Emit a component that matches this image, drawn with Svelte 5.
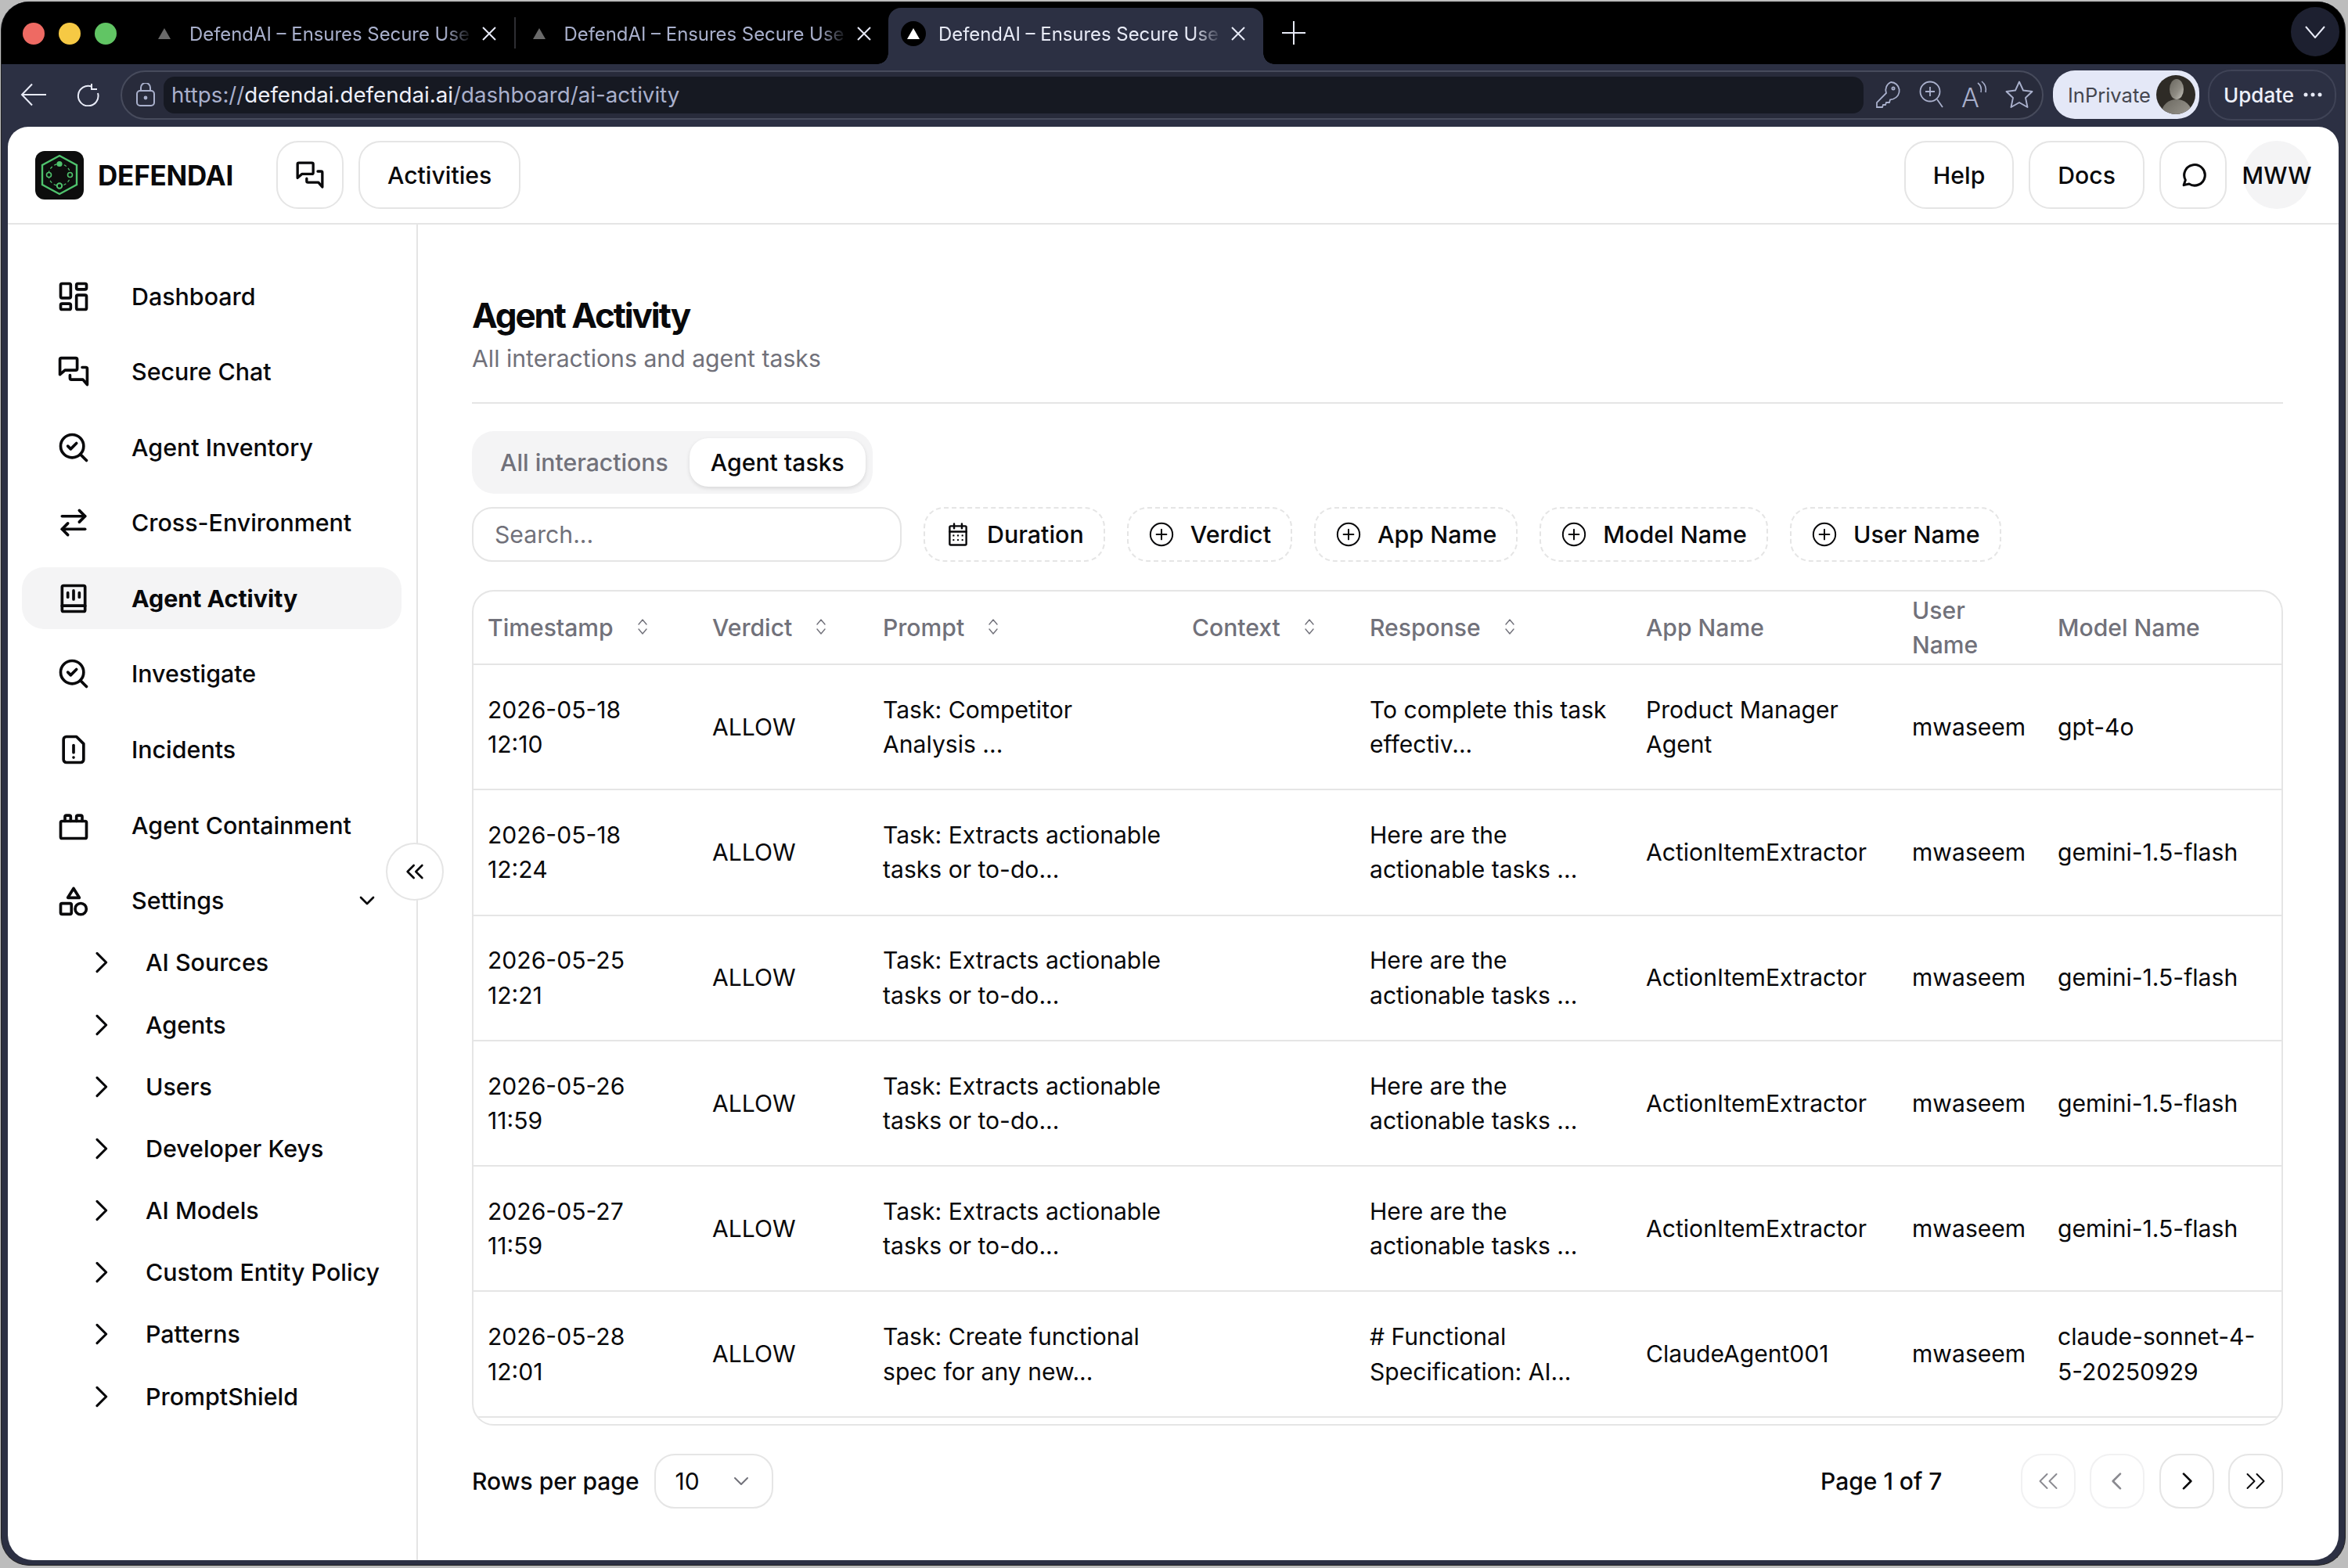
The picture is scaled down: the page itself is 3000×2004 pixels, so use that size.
<script>
	const rr = (x, y, w, h, r = 1) =>
		`M${x + r} ${y}h${w - 2 * r}a${r} ${r} 0 0 1 ${r} ${r}v${h - 2 * r}a${r} ${r} 0 0 1 -${r} ${r}h-${w - 2 * r}a${r} ${r} 0 0 1 -${r} -${r}v-${h - 2 * r}a${r} ${r} 0 0 1 ${r} -${r}z`;
	const circ = (x, y, r) => `M${x - r} ${y}a${r} ${r} 0 1 0 ${2 * r} 0a${r} ${r} 0 1 0 -${2 * r} 0`;

	const icons = {
		dashboard: [rr(3, 3, 7, 10), rr(14, 3, 7, 4), rr(14, 11, 7, 10), rr(3, 17, 7, 4)],
		chat: [
			'M2.5 14V3.5a1 1 0 0 1 1-1h10a1 1 0 0 1 1 1V10a1 1 0 0 1-1 1H6z',
			'M9.500 14.500V16.500a1 1 0 0 0 1 1h8l3 3.500V10a1 1 0 0 0-1-1h-2.500'
		],
		check: [circ(11, 11, 8), 'M21 21l-4.3-4.3', 'M8 11l2 2l4-4'],
		swap: ['M4 7.5h16', 'M16 3.5l4 4l-4 4', 'M20 16.5H4', 'M8 12.5l-4 4l4 4'],
		activity: [rr(4, 3, 16, 18), 'M4 17h16', 'M8 8v3', 'M12 6.5v6', 'M16 8v3'],
		incident: ['M5 5a2 2 0 0 1 2-2h7l5 5v11a2 2 0 0 1-2 2H7a2 2 0 0 1-2-2z', 'M12 9v5', 'M12 17.5v.01'],
		contain: [
			rr(3, 9, 18, 12),
			'M6 9V6a1 1 0 0 1 1-1h2a1 1 0 0 1 1 1v3',
			'M14 9V6a1 1 0 0 1 1-1h2a1 1 0 0 1 1 1v3'
		],
		shapes: ['M12 3.5l4 6.5h-8z', rr(3, 14, 7.5, 7.5), circ(17, 17.8, 3.9)],
		down: ['M6 9l6 6l6-6'],
		right: ['M9 5l7 7l-7 7'],
		left: ['M15 5l-7 7l7 7'],
		dleft: ['M11 6l-6 6l6 6', 'M19 6l-6 6l6 6'],
		dright: ['M5 6l6 6l-6 6', 'M13 6l6 6l-6 6'],
		bubble: ['M4 20.5l1.4-4.2A8.6 8.6 0 1 1 8.4 19.5z'],
		calendar: [rr(4.5, 4.5, 15, 17), 'M4.5 9.5h15', 'M8.5 2.5v4', 'M15.5 2.5v4', 'M8 13h.01M12 13h.01M16 13h.01M8 17h.01M12 17h.01M16 17h.01'],
		plus: [circ(12, 12, 10), 'M12 7.5v9', 'M7.5 12h9'],
		sort: ['M7 9l5-6l5 6', 'M7 15l5 6l5-6']
	};

	const nav = [
		{ label: 'Dashboard', icon: 'dashboard' },
		{ label: 'Secure Chat', icon: 'chat' },
		{ label: 'Agent Inventory', icon: 'check' },
		{ label: 'Cross-Environment', icon: 'swap' },
		{ label: 'Agent Activity', icon: 'activity', active: true },
		{ label: 'Investigate', icon: 'check' },
		{ label: 'Incidents', icon: 'incident' },
		{ label: 'Agent Containment', icon: 'contain' }
	];
	const sub = ['AI Sources', 'Agents', 'Users', 'Developer Keys', 'AI Models', 'Custom Entity Policy', 'Patterns', 'PromptShield'];
	const filters = ['Verdict', 'App Name', 'Model Name', 'User Name'];

	const columns = [
		{ label: 'Timestamp', sort: true },
		{ label: 'Verdict', sort: true },
		{ label: 'Prompt', sort: true },
		{ label: 'Context', sort: true },
		{ label: 'Response', sort: true },
		{ label: 'App Name' },
		{ label: 'User\nName' },
		{ label: 'Model Name' }
	];

	const extract = 'Task: Extracts actionable\ntasks or to-do...';
	const tasks = 'Here are the\nactionable tasks ...';
	const rows = [
		['2026-05-18\n12:10', 'Task: Competitor\nAnalysis ...', 'To complete this task\neffectiv...', 'Product Manager\nAgent', 'gpt-4o'],
		['2026-05-18\n12:24', extract, tasks, 'ActionItemExtractor', 'gemini-1.5-flash'],
		['2026-05-25\n12:21', extract, tasks, 'ActionItemExtractor', 'gemini-1.5-flash'],
		['2026-05-26\n11:59', extract, tasks, 'ActionItemExtractor', 'gemini-1.5-flash'],
		['2026-05-27\n11:59', extract, tasks, 'ActionItemExtractor', 'gemini-1.5-flash'],
		['2026-05-28\n12:01', 'Task: Create functional\nspec for any new...', '# Functional\nSpecification: AI...', 'ClaudeAgent001', 'claude-sonnet-4-\n5-20250929']
	];
</script>

{#snippet ic(name, size = 44, sw = 2)}
	<svg width={size} height={size} viewBox="0 0 24 24" fill="none" stroke="currentColor" stroke-width={sw} stroke-linecap="round" stroke-linejoin="round">
		{#each icons[name] as d}
			<path {d} />
		{/each}
	</svg>
{/snippet}

{#snippet browserTab(active)}
	<div class="tab" class:active>
		<span class="favicon"><i></i></span>
		<span class="tab-title">DefendAI – Ensures Secure Use of AI</span>
		<svg class="tab-x" width="20" height="20" viewBox="0 0 20 20" stroke="currentColor" stroke-width="2"><path d="M2 2l16 16M18 2L2 18" /></svg>
	</div>
{/snippet}

<div class="window">
	<div class="titlebar">
		<div class="lights"><i class="red"></i><i class="yellow"></i><i class="green"></i></div>
		{@render browserTab(false)}
		<span class="tab-sep"></span>
		{@render browserTab(false)}
		{@render browserTab(true)}
		<svg class="new-tab" width="30" height="30" viewBox="0 0 30 30" stroke="#e8ebf7" stroke-width="2"><path d="M15 0v30M0 15h30" /></svg>
		<div class="tab-menu">
			<svg width="26" height="16" viewBox="0 0 26 16" fill="none" stroke="#e8ebf7" stroke-width="2"><path d="M1 1l12 14L25 1" /></svg>
		</div>
	</div>

	<div class="toolbar">
		<svg class="back" width="34" height="30" viewBox="0 0 34 30" fill="none" stroke="#e8ebf7" stroke-width="2"><path d="M33 15H2M15 1.5L2 15l13 13.5" /></svg>
		<svg class="reload" width="30" height="30" viewBox="0 0 30 30" fill="none" stroke="#e8ebf7" stroke-width="2"><path d="M19 4.5A12.8 12.8 0 1 0 27 13M19 1v7h7" /></svg>
		<div class="address">
			<svg class="lock" width="26" height="30" viewBox="0 0 26 30" fill="none" stroke="#a9b0cc" stroke-width="2"><rect x="2" y="10" width="22" height="19" rx="4" /><path d="M7 10V6a6 6 0 0 1 12 0v4" /><circle cx="13" cy="19" r="1.4" fill="#a9b0cc" /></svg>
			<div class="url"><span class="dim">https://</span>defendai.defendai.ai<span class="dim">/dashboard/ai-activity</span></div>
			<div class="addr-icons">
				<svg width="34" height="36" viewBox="0 0 34 36" fill="none" stroke="#a9b0cc" stroke-width="1.8"><path d="M20 2a11 11 0 0 1 3 21.5l-4 1-1 3.5h-4l-1 3h-3l-1 3H2v-6l12-12A11 11 0 0 1 20 2z" /><circle cx="23" cy="10" r="1.6" /></svg>
				<svg width="32" height="36" viewBox="0 0 32 36" fill="none" stroke="#a9b0cc" stroke-width="1.8"><circle cx="14" cy="14" r="12.5" /><path d="M23 24l7 10M14 8v12M8 14h12" /></svg>
				<svg width="34" height="36" viewBox="0 0 34 36" fill="none" stroke="#a9b0cc" stroke-width="1.6"><text x="0" y="34" font-family="Inter" font-size="34" font-weight="300" fill="#a9b0cc" stroke="none">A</text><path d="M21 3c4 3 5 7 4 12M26 1c5 4 6 9 5 14" /></svg>
				<svg width="36" height="36" viewBox="0 0 36 36" fill="none" stroke="#a9b0cc" stroke-width="1.9" stroke-linejoin="round"><path d="M18 1.5l5 11 11.500 1.500-8.500 8 2.500 12L18 28l-10.500 6L10 22l-8.500-8 11.500-1.500z" /></svg>
			</div>
		</div>
		<div class="inprivate">
			<span>InPrivate</span>
			<svg width="50" height="50" viewBox="0 0 50 50">
				<defs>
					<linearGradient id="face" x1="0" y1="0" x2="1" y2="1"><stop offset="0" stop-color="#6a675f" /><stop offset="0.6" stop-color="#8f8c84" /><stop offset="1" stop-color="#c9c7c0" /></linearGradient>
					<clipPath id="disc"><circle cx="25" cy="25" r="25" /></clipPath>
				</defs>
				<g clip-path="url(#disc)">
					<rect width="50" height="50" fill="#2e2b26" />
					<ellipse cx="26" cy="18" rx="9" ry="13" fill="url(#face)" />
					<ellipse cx="26" cy="48" rx="19" ry="17" fill="url(#face)" />
				</g>
			</svg>
		</div>
		<div class="update">
			<span>Update</span>
			<svg width="24" height="6" viewBox="0 0 24 6" fill="#e8ebf7"><circle cx="3" cy="3" r="2.500" /><circle cx="12" cy="3" r="2.500" /><circle cx="21" cy="3" r="2.500" /></svg>
		</div>
	</div>

	<div class="page">
		<header class="topbar">
			<div class="brand">
				<svg width="62" height="62" viewBox="0 0 62 62" fill="none">
					<rect width="62" height="62" rx="12" fill="#0d0d0d" />
					<path d="M31 6l22 12v25L31 55 9 43V18z" stroke="#4fc36d" stroke-width="2.400" />
					<circle cx="31" cy="30.500" r="14" stroke="#4fc36d" stroke-width="1.200" stroke-dasharray="3.500 3" />
					<circle cx="31" cy="16.500" r="3.600" fill="#4fc36d" />
					<circle cx="17.500" cy="30.500" r="3" fill="#0d0d0d" stroke="#4fc36d" stroke-width="1.600" />
					<circle cx="44.500" cy="30.500" r="3" fill="#0d0d0d" stroke="#4fc36d" stroke-width="1.600" />
					<circle cx="31" cy="44.500" r="3.200" fill="#0d0d0d" stroke="#4fc36d" stroke-width="2" />
				</svg>
				<span>DEFENDAI</span>
			</div>
			<button class="btn square">{@render ic('chat', 40, 2)}</button>
			<button class="btn">Activities</button>
			<div class="spacer"></div>
			<button class="btn">Help</button>
			<button class="btn">Docs</button>
			<button class="btn square">{@render ic('bubble', 37, 2)}</button>
			<div class="avatar">MWW</div>
		</header>

		<div class="body">
			<aside class="sidebar">
				<nav class="nav">
					{#each nav as item}
						<a class="nav-item" class:active={item.active} href="#top">
							{@render ic(item.icon)}
							<span>{item.label}</span>
						</a>
					{/each}
					<div>
						<a class="nav-item" href="#top">
							{@render ic('shapes')}
							<span>Settings</span>
							<span class="caret">{@render ic('down', 32, 2)}</span>
						</a>
						{#each sub as label}
							<a class="sub-item" href="#top">
								{@render ic('right', 40, 1.900)}
								<span>{label}</span>
							</a>
						{/each}
					</div>
				</nav>
				<button class="collapse">{@render ic('dleft', 32, 2)}</button>
			</aside>

			<main class="main">
				<h1>Agent Activity</h1>
				<p class="subtitle">All interactions and agent tasks</p>
				<hr />

				<div class="tabs">
					<button class="seg">All interactions</button>
					<button class="seg on">Agent tasks</button>
				</div>

				<div class="filters">
					<input class="search" placeholder="Search..." />
					<button class="filter">{@render ic('calendar', 34, 1.700)}Duration</button>
					{#each filters as f}
						<button class="filter">{@render ic('plus', 34, 1.400)}{f}</button>
					{/each}
				</div>

				<div class="card">
					<table>
						<colgroup>
							<col style="width:287px" /><col style="width:218px" /><col style="width:395px" /><col style="width:227px" />
							<col style="width:353px" /><col style="width:340px" /><col style="width:186px" /><col style="width:304px" />
						</colgroup>
						<thead>
							<tr>
								{#each columns as c}
									<th>
										<span class="th">{c.label}{#if c.sort}<span class="sort">{@render ic('sort', 24, 1.400)}</span>{/if}</span>
									</th>
								{/each}
							</tr>
						</thead>
						<tbody>
							{#each rows as r}
								<tr>
									<td>{r[0]}</td>
									<td>ALLOW</td>
									<td>{r[1]}</td>
									<td></td>
									<td>{r[2]}</td>
									<td>{r[3]}</td>
									<td>mwaseem</td>
									<td>{r[4]}</td>
								</tr>
							{/each}
						</tbody>
					</table>
				</div>

				<footer class="pager">
					<span class="rows-label">Rows per page</span>
					<div class="select">10 <span class="sel-caret">{@render ic('down', 32, 1.500)}</span></div>
					<div class="spacer"></div>
					<span class="page-label">Page 1 of 7</span>
					<div class="pages">
						<button class="pg off">{@render ic('dleft', 36, 1.300)}</button>
						<button class="pg off">{@render ic('left', 32, 2)}</button>
						<button class="pg">{@render ic('right', 32, 2)}</button>
						<button class="pg">{@render ic('dright', 36, 1.300)}</button>
					</div>
				</footer>
			</main>
		</div>
	</div>
</div>

<style>
	:global(body) {
		background: #bdbdbd;
		font-family: Inter, "Liberation Sans", sans-serif;
		color: #09090b;
	}
	* {
		box-sizing: border-box;
	}
	button,
	input {
		font: inherit;
		color: inherit;
	}
	svg {
		display: block;
		flex: none;
	}

	.window {
		width: 2996px;
		height: 1999px;
		margin: 2px 0 0 1px;
		border-radius: 36px;
		background: #2c3043;
		display: flex;
		flex-direction: column;
		overflow: hidden;
		border: 1px solid #222;
		border-top: 0;
	}

	/* tab strip */
	.titlebar {
		height: 80px;
		background: #000;
		display: flex;
		align-items: flex-end;
		position: relative;
		flex: none;
	}
	.lights {
		display: flex;
		gap: 18px;
		margin: 0 29px 25px 27px;
	}
	.lights i {
		width: 28px;
		height: 28px;
		border-radius: 50%;
	}
	.red { background: #ee6a63; }
	.yellow { background: #f6c944; }
	.green { background: #61c564; }

	.tab {
		width: 478.500px;
		height: 72px;
		display: flex;
		padding: 0 0 6px 16px;
		align-items: center;
		color: #a9b0cc;
		font-size: 23.900px;
		position: relative;
		flex: none;
	}
	.tab.active {
		background: #2c3043;
		color: #e8ebf7;
		border-radius: 16px 16px 0 0;
	}
	.tab.active::before,
	.tab.active::after {
		content: '';
		position: absolute;
		bottom: 0;
		width: 14px;
		height: 14px;
		background: radial-gradient(circle at 0 0, transparent 13.500px, #2c3043 14px);
	}
	.tab.active::before { left: -14px; }
	.tab.active::after {
		right: -14px;
		background: radial-gradient(circle at 100% 0, transparent 13.500px, #2c3043 14px);
	}
	.favicon {
		width: 32px;
		height: 32px;
		border-radius: 50%;
		display: flex;
		align-items: center;
		justify-content: center;
		flex: none;
	}
	.active .favicon { background: #000; }
	.favicon i {
		border-left: 8px solid transparent;
		border-right: 8px solid transparent;
		border-bottom: 14px solid #6a6a6a;
	}
	.active .favicon i { border-bottom-color: #fff; }
	.tab-title {
		margin-left: 16px;
		width: 362px;
		white-space: nowrap;
		overflow: hidden;
		-webkit-mask-image: linear-gradient(to right, #000 90%, transparent 100%);
		mask-image: linear-gradient(to right, #000 90%, transparent 100%);
	}
	.tab-x {
		margin-left: 11px;
		color: #e8ebf7;
	}
	.tab-sep {
		width: 2px;
		height: 40px;
		background: #2e2e33;
		margin: 0 -2px 20px 0;
		z-index: 1;
	}
	.new-tab {
		margin: 0 0 25px 24px;
	}
	.tab-menu {
		position: absolute;
		right: 7px;
		top: 7px;
		width: 62px;
		height: 63px;
		border-radius: 50%;
		background: #1d2030;
		display: flex;
		align-items: center;
		justify-content: center;
	}

	/* address bar */
	.toolbar {
		height: 80px;
		display: flex;
		align-items: center;
		padding: 0 9px 2px 24px;
		flex: none;
	}
	.reload {
		margin-left: 38px;
	}
	.address {
		width: 2457px;
		height: 63px;
		margin-left: 26px;
		border: 2px solid #474b5c;
		border-radius: 32px;
		background: #23263380;
		display: flex;
		align-items: center;
		padding-left: 17px;
	}
	.url {
		margin-left: 10px;
		width: 2172px;
		height: 47px;
		background: #161922;
		border-radius: 14px;
		padding-left: 10px;
		line-height: 47px;
		font-size: 27.700px;
		color: #eef0fa;
		flex: none;
	}
	.dim {
		color: #a9b0cc;
	}
	.addr-icons {
		display: flex;
		align-items: center;
		gap: 22px;
		margin-left: 15px;
	}
	.inprivate {
		width: 187px;
		height: 62px;
		margin-left: 12px;
		background: #e4e8f7;
		border-radius: 28px;
		display: flex;
		align-items: center;
		justify-content: space-between;
		padding: 0 5px 0 19px;
		font-size: 25.500px;
		color: #44464f;
	}
	.update {
		width: 164px;
		height: 65px;
		margin-left: 11px;
		border: 2px solid #3f4356;
		border-radius: 30px;
		display: flex;
		align-items: center;
		gap: 12px;
		padding-left: 18px;
		font-size: 26px;
		font-weight: 500;
		color: #eef0fa;
	}

	/* page */
	.page {
		flex: 1;
		margin: 0 8px 6px 8px;
		background: #fff;
		border-radius: 26px 26px 32px 32px;
		display: flex;
		flex-direction: column;
		overflow: hidden;
	}
	.topbar {
		height: 125px;
		flex: none;
		display: flex;
		align-items: center;
		gap: 19px;
		padding: 0 36px 0 35px;
		border-bottom: 2px solid #e5e5e5;
	}
	.brand {
		width: 289px;
		display: flex;
		align-items: center;
		gap: 18px;
		font-size: 35px;
		font-weight: 700;
		letter-spacing: -0.2px;
	}
	.btn {
		height: 87px;
		background: #fff;
		border: 2px solid #e5e5e5;
		border-radius: 28px;
		padding: 0 35px;
		font-size: 30.200px;
		font-weight: 500;
	}
	.btn.square {
		width: 86px;
		padding: 0;
		display: flex;
		align-items: center;
		justify-content: center;
	}
	.spacer {
		flex: 1;
	}
	.avatar {
		width: 86px;
		height: 87px;
		margin-left: 2px;
		border-radius: 50%;
		background: #f4f4f5;
		display: flex;
		align-items: center;
		justify-content: center;
		font-size: 30.200px;
		font-weight: 500;
		white-space: nowrap;
	}

	.body {
		flex: 1;
		display: flex;
		min-height: 0;
	}
	.sidebar {
		width: 524px;
		flex: none;
		border-right: 2px solid #e5e5e5;
		position: relative;
		padding: 52px 19px 0 18px;
	}
	.nav {
		display: flex;
		flex-direction: column;
		gap: 17.600px;
	}
	.nav-item {
		height: 79px;
		display: flex;
		align-items: center;
		gap: 52px;
		padding: 0 28px 0 44px;
		border-radius: 28px;
		color: inherit;
		text-decoration: none;
		font-size: 30.400px;
		font-weight: 500;
	}
	.nav-item.active {
		background: #f4f4f5;
		font-weight: 700;
	}
	.caret {
		margin-left: auto;
	}
	.sub-item {
		height: 79.200px;
		display: flex;
		align-items: center;
		gap: 37px;
		padding-left: 81px;
		color: inherit;
		text-decoration: none;
		font-size: 30.400px;
		font-weight: 500;
		white-space: nowrap;
	}
	.collapse {
		position: absolute;
		right: -35px;
		top: 790px;
		width: 74px;
		height: 74px;
		border-radius: 50%;
		border: 2px solid #e5e5e5;
		background: #fff;
		display: flex;
		align-items: center;
		justify-content: center;
		padding: 0;
		z-index: 2;
	}

	.main {
		flex: 1;
		min-width: 0;
		padding: 88px 71px 0 69px;
	}
	h1 {
		margin: 0;
		font-size: 44px;
		line-height: 56px;
		font-weight: 700;
		letter-spacing: -2.100px;
	}
	.subtitle {
		margin: 5px 0 0;
		font-size: 30.200px;
		line-height: 44px;
		color: #71717a;
	}
	hr {
		border: 0;
		height: 2px;
		background: #e5e5e5;
		margin: 34px 0 35px;
	}
	.tabs {
		display: inline-flex;
		height: 80px;
		background: #f4f4f5;
		border-radius: 28px;
		padding: 9px;
		width: 512px;
		vertical-align: top;
	}
	.seg {
		border: 0;
		background: none;
		padding: 0 27px;
		font-size: 30.200px;
		font-weight: 500;
		color: #71717a;
		white-space: nowrap;
		border-radius: 24px;
	}
	.seg.on {
		background: #fff;
		color: #09090b;
		box-shadow: 0 2px 5px rgba(0, 0, 0, 0.12);
	}
	.filters {
		display: flex;
		gap: 28px;
		margin-top: 17px;
		height: 70px;
	}
	.search {
		width: 549px;
		height: 70px;
		border: 2px solid #e5e5e5;
		border-radius: 26px;
		padding: 0 27px;
		font-size: 30.200px;
		outline: none;
		background: #fff;
	}
	.search::placeholder {
		color: #71717a;
	}
	.filter {
		height: 70px;
		display: flex;
		align-items: center;
		gap: 20px;
		padding: 0 25px;
		background: #fff;
		border: 2px dashed #e5e5e5;
		border-radius: 26px;
		font-size: 30.400px;
		font-weight: 500;
		white-space: nowrap;
	}

	.card {
		margin-top: 36px;
		height: 1068px;
		border: 2px solid #e5e5e5;
		border-radius: 28px;
		overflow: hidden;
	}
	table {
		width: 2310px;
		table-layout: fixed;
		border-spacing: 0;
		font-size: 30.100px;
		line-height: 44.500px;
	}
	th,
	td {
		padding: 0 0 0 18px;
		text-align: left;
		white-space: pre-line;
		border-bottom: 2px solid #e5e5e5;
		vertical-align: middle;
	}
	th {
		height: 94px;
		font-weight: 500;
		color: #71717a;
	}
	td {
		height: 160.300px;
		font-weight: 400;
	}
	.th {
		display: inline-flex;
		align-items: center;
	}
	.sort {
		margin-left: 25px;
		color: #71717a;
		position: relative;
		top: -1px;
	}

	.pager {
		margin-top: 36px;
		height: 70px;
		display: flex;
		align-items: center;
		font-size: 30px;
		font-weight: 500;
	}
	.select {
		width: 152px;
		height: 70px;
		margin-left: 19px;
		border: 2px solid #e5e5e5;
		border-radius: 26px;
		display: flex;
		align-items: center;
		justify-content: space-between;
		padding: 0 23px 0 25px;
		font-weight: 400;
	}
	.sel-caret {
		color: #71717a;
	}
	.page-label {
		margin-right: 100px;
	}
	.pages {
		display: flex;
		gap: 18.500px;
	}
	.pg {
		width: 70px;
		height: 70px;
		border-radius: 26px;
		border: 2px solid #e5e5e5;
		background: #fff;
		display: flex;
		align-items: center;
		justify-content: center;
		padding: 0;
	}
	.pg.off {
		border-color: #f1f1f2;
		color: #8a8a90;
	}
</style>
